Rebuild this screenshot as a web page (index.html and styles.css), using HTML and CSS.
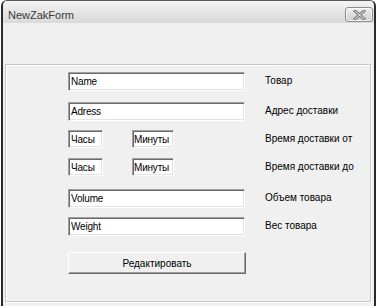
FILE: index.html
```html
<!DOCTYPE html>
<html lang="ru">
<head>
    <meta charset="UTF-8">
    <title>NewZakForm</title>
    <link rel="stylesheet" href="styles.css">
</head>
<body>
    <div class="window">
        <div class="title-bar">
            <span class="title-text">NewZakForm</span>
            <button class="close-btn" aria-label="Close">
                <svg width="13" height="10" viewBox="0 0 13 10">
                    <path d="M2 1 L11 9 M11 1 L2 9" stroke="#777" stroke-width="3" stroke-linecap="square"/>
                    <path d="M2 1 L11 9 M11 1 L2 9" stroke="#f4f4f4" stroke-width="1" stroke-linecap="square"/>
                </svg>
            </button>
        </div>

        <div class="group-box">
            <div class="form-row">
                <input class="field" type="text" value="Name">
                <label class="field-label">Товар</label>
            </div>
            <div class="form-row">
                <input class="field" type="text" value="Adress">
                <label class="field-label">Адрес доставки</label>
            </div>
            <div class="form-row">
                <div class="time-pair">
                    <input class="field field-hours" type="text" value="Часы">
                    <input class="field field-minutes" type="text" value="Минуты">
                </div>
                <label class="field-label">Время доставки от</label>
            </div>
            <div class="form-row">
                <div class="time-pair">
                    <input class="field field-hours" type="text" value="Часы">
                    <input class="field field-minutes" type="text" value="Минуты">
                </div>
                <label class="field-label">Время доставки до</label>
            </div>
            <div class="form-row row-wide">
                <input class="field" type="text" value="Volume">
                <label class="field-label">Объем товара</label>
            </div>
            <div class="form-row">
                <input class="field" type="text" value="Weight">
                <label class="field-label">Вес товара</label>
            </div>
            <div class="form-row row-button">
                <button class="edit-btn">Редактировать</button>
            </div>
        </div>
    </div>
</body>
</html>
```

FILE: styles.css
```css
* {
    margin: 0;
    padding: 0;
    box-sizing: border-box;
}

body {
    width: 376px;
    height: 306px;
    overflow: hidden;
    background: #fff;
    font-family: 'Liberation Sans', Arial, sans-serif;
    font-size: 10px;
    letter-spacing: -0.2px;
    color: #000;
}

.window {
    margin-left: 1px;
    height: 306px;
    background: #f0f0f0;
    border: 2px solid #2b2b2b;
    border-top: 1px solid #5a5a5a;
    border-bottom: none;
    border-radius: 6px 6px 0 0;
    overflow: hidden;
}

.title-bar {
    height: 22px;
    display: flex;
    align-items: flex-start;
    justify-content: space-between;
    padding: 8px 1px 0 5px;
    background: linear-gradient(180deg, #f4f4f4 0%, #e2e2e2 60%, #dadada 100%);
}

.title-text {
    font-size: 11px;
    letter-spacing: 0;
    color: #3a3a3a;
    line-height: 12px;
}

.close-btn {
    width: 28px;
    height: 15px;
    margin-top: -2px;
    border: 1px solid #8e8e8e;
    border-radius: 3px;
    background: linear-gradient(180deg, #f2f2f2 0%, #dedede 50%, #d0d0d0 100%);
    box-shadow: inset 0 0 0 1px rgba(255, 255, 255, 0.7);
    display: flex;
    align-items: center;
    justify-content: center;
}

.group-box {
    margin: 41px 3px 0 2px;
    height: 238px;
    border: 1px solid #c6c6c6;
    box-shadow: inset 1px 1px 0 #fff, 1px 1px 0 #fff;
    padding: 7px 0 0 62px;
    display: flex;
    flex-direction: column;
    gap: 9px;
}

.form-row {
    display: flex;
    align-items: flex-start;
    gap: 20px;
    height: 19px;
}

.form-row:first-child + .form-row {
    margin-top: 2px;
}

.row-wide {
    margin-top: 3px;
}

.row-button {
    margin-top: 7px;
    height: 22px;
}

.field {
    width: 177px;
    height: 19px;
    border: 1px solid;
    border-color: #a0a0a0 #fff #fff #a0a0a0;
    box-shadow: inset 1px 1px 0 #696969, inset -1px -1px 0 #e3e3e3;
    background: #fff;
    padding: 0 2px;
    font-family: 'Liberation Sans', Arial, sans-serif;
    font-size: 10px;
    letter-spacing: -0.2px;
    color: #000;
    outline: none;
}

.time-pair {
    width: 177px;
    display: flex;
    gap: 29px;
}

.field-hours {
    width: 35px;
    height: 18px;
}

.field-minutes {
    width: 42px;
    height: 18px;
    padding: 0 1px;
}

.field-label {
    padding-top: 2px;
    line-height: 13px;
    letter-spacing: 0;
    white-space: nowrap;
}

.edit-btn {
    width: 178px;
    height: 22px;
    border: 1px solid;
    border-color: #fff #696969 #696969 #fff;
    box-shadow: inset -1px -1px 0 #a0a0a0;
    background: #f0f0f0;
    font-family: 'Liberation Sans', Arial, sans-serif;
    font-size: 10px;
    color: #000;
}
```
